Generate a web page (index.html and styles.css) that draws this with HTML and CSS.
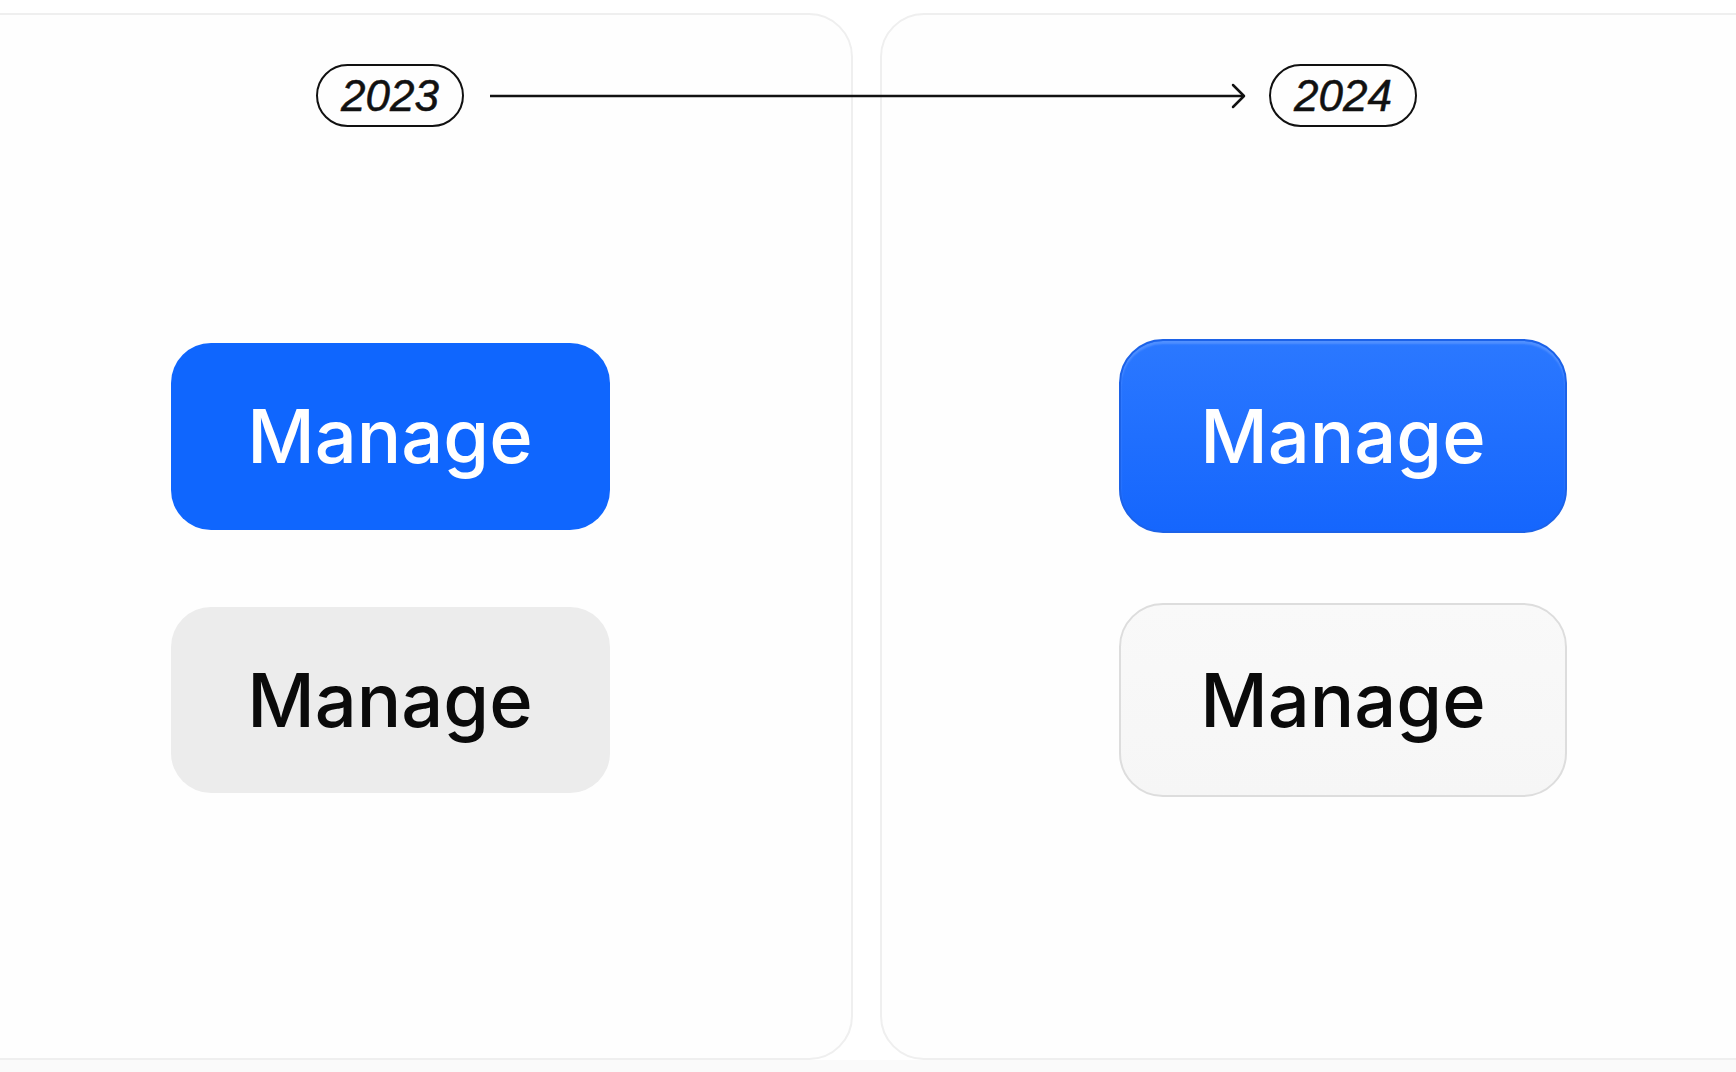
FILE: index.html
```html
<!DOCTYPE html>
<html lang="en">
<head>
  <meta charset="UTF-8" />
  <title>Button styles 2023 / 2024</title>
  <link rel="stylesheet" href="styles.css">
</head>
<body>
  <div class="stage">
    <div class="cards">
      <!-- Old style: flat fills -->
      <section class="card">
        <span class="year">2023</span>
        <div class="buttons">
          <div class="slot"><button class="btn btn-primary-flat">Manage</button></div>
          <div class="slot"><button class="btn btn-secondary-flat">Manage</button></div>
        </div>
      </section>

      <!-- New style: gradient, borders -->
      <section class="card">
        <span class="year">2024</span>
        <div class="buttons">
          <div class="slot"><button class="btn btn-primary">Manage</button></div>
          <div class="slot"><button class="btn btn-secondary">Manage</button></div>
        </div>
      </section>
    </div>

    <!-- Arrow from one year to the next, drawn over both cards -->
    <svg class="year-arrow" width="760" height="28" viewBox="0 0 760 28" fill="none">
      <path d="M2 13H756" stroke="#111" stroke-width="2.5" />
      <path d="M745 2L756 13L745 24" stroke="#111" stroke-width="2.5" stroke-linecap="round" stroke-linejoin="round" />
    </svg>
  </div>
</body>
</html>
```

FILE: styles.css
```css
html {
  background: #fafafa;
}
body {
  margin: 0;
  font-family: Inter, "Liberation Sans", sans-serif;
  color: #0a0a0a;
}
.stage {
  position: relative;
  background: #fff;
  padding-top: 13px;
  overflow: hidden;
}
.cards {
  display: flex;
  gap: 27px;
  margin-left: -73px;
}
.card {
  flex: 0 0 926px;
  box-sizing: border-box;
  height: 1047px;
  background: #fefefe;
  border: 2px solid #efefef;
  border-radius: 44px;
  padding-top: 49px;
  display: flex;
  flex-direction: column;
  align-items: center;
}
.year {
  box-sizing: border-box;
  width: 148px;
  height: 63px;
  border: 2.5px solid #111;
  border-radius: 999px;
  display: flex;
  align-items: center;
  justify-content: center;
  font-family: "Liberation Sans", Arial, sans-serif;
  font-style: italic;
  font-size: 44px;
  color: #111;
  -webkit-text-stroke: 0.5px #111;
}
.buttons {
  margin-top: 212px;
  display: flex;
  flex-direction: column;
  gap: 70px;
}
.slot {
  height: 194px;
  width: 448px;
  display: flex;
  align-items: center;
  justify-content: center;
}
.btn {
  box-sizing: border-box;
  display: flex;
  align-items: center;
  justify-content: center;
  font-family: Inter, "Liberation Sans", sans-serif;
  font-size: 74px;
  font-weight: 500;
  border: none;
  padding: 0;
  cursor: pointer;
}
.btn-primary-flat {
  width: 439px;
  height: 187px;
  border-radius: 40px;
  background: #0f66fe;
  color: #fff;
}
.btn-secondary-flat {
  width: 439px;
  height: 186px;
  border-radius: 40px;
  background: #ececec;
  color: #0a0a0a;
}
.btn-primary {
  width: 448px;
  height: 194px;
  border-radius: 44px;
  background: linear-gradient(#2b78ff, #1566fd);
  border: 2px solid #1c62e8;
  box-shadow: inset 0 3px 2px rgba(255, 255, 255, 0.18);
  color: #fff;
}
.btn-secondary {
  width: 448px;
  height: 194px;
  border-radius: 44px;
  background: linear-gradient(#f9f9f9, #f6f6f6);
  border: 2px solid #dddddd;
  color: #0a0a0a;
}
.year-arrow {
  position: absolute;
  left: 488px;
  top: 83px;
}
```
